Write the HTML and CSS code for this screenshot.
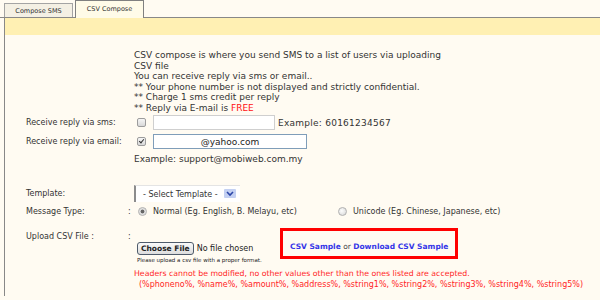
FILE: index.html
```html
<!DOCTYPE html>
<html lang="en">
<head>
    <meta charset="UTF-8">
    <title>CSV Compose</title>
    <link rel="stylesheet" href="styles.css">
</head>
<body>
    <div class="tabs">
        <div class="tab">Compose SMS</div>
        <div class="tab active">CSV Compose</div>
    </div>

    <div class="panel">
        <div class="bar"></div>
        <div class="content">
            <div class="intro">
                CSV compose is where you send SMS to a list of users via uploading<br>
                CSV file<br>
                You can receive reply via sms or email..<br>
                ** Your phone number is not displayed and strictly confidential.<br>
                ** Charge 1 sms credit per reply<br>
                ** Reply via E-mail is <span class="free">FREE</span>
            </div>

            <div class="row row-sms">
                <span class="lbl">Receive reply via sms:</span>
                <span class="colon"></span>
                <input type="checkbox" class="chk">
                <input type="text" class="txt sms-input">
                <span class="hint">Example: 60161234567</span>
            </div>
            <div class="row row-email">
                <span class="lbl">Receive reply via email:</span>
                <span class="colon"></span>
                <input type="checkbox" class="chk" checked>
                <input type="text" class="txt email-input" value="@yahoo.com">
            </div>
            <div class="example">Example: support@mobiweb.com.my</div>

            <div class="row row-tpl">
                <span class="lbl">Template:</span>
                <span class="colon"></span>
                <div class="select">
                    <span>- Select Template -</span>
                    <svg width="12" height="9" viewBox="0 0 12 9">
                        <rect x="0" y="0" width="12" height="9" rx="1" fill="#c3d0f2"/>
                        <path d="M3 3 L6 6 L9 3" fill="none" stroke="#2b46a8" stroke-width="1.6"/>
                    </svg>
                </div>
            </div>

            <div class="row row-type">
                <span class="lbl">Message Type:</span>
                <span class="colon">:</span>
                <label class="opt opt-first"><input type="radio" name="mtype" class="rad" checked>Normal (Eg. English, B. Melayu, etc)</label>
                <label class="opt"><input type="radio" name="mtype" class="rad">Unicode (Eg. Chinese, Japanese, etc)</label>
            </div>

            <div class="row row-upload">
                <span class="lbl">Upload CSV File :</span>
                <span class="colon">:</span>
                <div class="upval">
                    <div class="uptop">
                        <div class="filebox">
                            <input type="file" class="file">
                            <div class="help">Please upload a csv file with a proper format.</div>
                        </div>
                        <div class="samplebox">
                            <a href="#">CSV Sample</a> <span class="or">or</span> <a href="#">Download CSV Sample</a>
                        </div>
                    </div>
                    <div class="errors">
                        <div class="head-note">Headers cannot be modified, no other values other than the ones listed are accepted.</div>
                        <div class="vars">(%phoneno%, %name%, %amount%, %address%, %string1%, %string2%, %string3%, %string4%, %string5%)</div>
                    </div>
                </div>
            </div>
        </div>
    </div>
</body>
</html>
```

FILE: styles.css
```css
body {
    margin: 0;
    background: #fffbf2;
    font-family: "DejaVu Sans", Verdana, sans-serif;
    font-size: 9px;
    color: #333;
}

/* Tabs */
.tabs {
    display: flex;
    align-items: flex-end;
    height: 17px;
    padding-left: 4px;
    gap: 2px;
    border-bottom: 1px solid #888;
}
.tab {
    width: 67px;
    height: 13px;
    line-height: 14px;
    border: 1px solid #a4a4a4;
    border-bottom: none;
    background: #f4f0e4;
    font-size: 6.5px;
    text-align: center;
    color: #333;
}
.tab.active {
    height: 17px;
    line-height: 17px;
    margin-bottom: -1px;
    border-color: #808080;
    background: #fffbe8;
}

.panel {
    margin-left: 4px;
    border-left: 1px solid #888;
    height: 278px;
}
.bar {
    height: 17px;
    background: #fff0b3;
}
.content {
    padding-left: 21px;
}

.intro {
    margin-left: 108px;
    padding-top: 15px;
    line-height: 10.5px;
}
.free {
    color: #ff1010;
}

/* Form rows */
.row {
    display: flex;
    align-items: center;
}
.lbl {
    width: 102px;
    font-size: 8px;
    color: #333;
}
.colon {
    width: 6px;
    font-size: 8px;
}

.chk {
    appearance: none;
    width: 9px;
    height: 9px;
    margin: 0 7px 0 3px;
    border: 1px solid #9c9c9c;
    border-radius: 2px;
    background: linear-gradient(#f6f6f6, #d8d8d8);
    box-sizing: border-box;
    position: relative;
}
.chk:checked::after {
    content: "";
    position: absolute;
    left: 2px;
    top: 0;
    width: 2px;
    height: 4px;
    border: solid #333;
    border-width: 0 1.5px 1.5px 0;
    transform: rotate(40deg);
}

.txt {
    height: 15px;
    box-sizing: border-box;
    margin: 0;
    padding: 0 3px;
    font-family: inherit;
    font-size: 9px;
    color: #222;
    background: #fff;
}
.row-sms {
    margin-top: 2px;
}
.sms-input {
    width: 122px;
    border: 1px solid #cfcfcf;
    margin-right: 3px;
}
.hint {
    letter-spacing: 0.25px;
}
.row-email {
    margin-top: 4px;
}
.email-input {
    width: 154px;
    border: 1px solid #7f9db9;
    text-align: center;
}
.example {
    margin: 5px 0 0 108px;
    line-height: 11px;
}

.row-tpl {
    margin-top: 20px;
}
.select {
    display: flex;
    align-items: flex-end;
    gap: 6px;
    width: 106px;
    height: 17px;
    box-sizing: border-box;
    padding: 0 0 3px 7px;
    border-left: 2px solid #8c8c8c;
    border-top: 1px solid #e4e4e4;
    background: #fff;
    font-size: 8px;
    line-height: 9px;
    white-space: nowrap;
}
.select svg {
    margin-bottom: 1px;
    flex-shrink: 0;
}

.row-type {
    margin-top: 4px;
    height: 11px;
}
.opt {
    display: flex;
    align-items: center;
    font-size: 8px;
    color: #333;
}
.opt-first {
    width: 200px;
}
.rad {
    appearance: none;
    width: 9px;
    height: 9px;
    margin: 0 6px 0 4px;
    border: 1px solid #b0b0b0;
    border-radius: 50%;
    box-sizing: border-box;
    background: radial-gradient(circle at 40% 40%, #fdfdfd, #d4d4d4);
}
.rad:checked {
    background: radial-gradient(circle, #666 0 1.6px, #d8d8d8 2.2px, #f4f4f4);
}

/* Upload */
.row-upload {
    align-items: flex-start;
    margin-top: 11px;
}
.row-upload .lbl,
.row-upload .colon {
    padding-top: 3px;
    line-height: 11px;
}
.upval {
    display: flex;
    flex-direction: column;
}
.uptop {
    display: flex;
    align-items: flex-start;
}
.filebox {
    width: 146px;
    box-sizing: border-box;
    padding: 14px 0 0 3px;
}
.file {
    display: block;
    font-family: inherit;
    font-size: 8px;
    color: #222;
    height: 13px;
}
.file::file-selector-button {
    height: 13px;
    padding: 0 3px;
    margin-right: 3px;
    border: 1px solid #4f5b6b;
    border-radius: 3px;
    background: linear-gradient(#fafafa, #dcdcdc);
    font-family: inherit;
    font-size: 7.5px;
    font-weight: bold;
    color: #222;
}
.help {
    margin-top: 2px;
    font-size: 5.5px;
    line-height: 7px;
    color: #222;
}
.samplebox {
    width: 178px;
    height: 31px;
    box-sizing: border-box;
    border: 3px solid #ff0000;
    padding: 10px 0 0 7px;
    font-size: 7.5px;
    line-height: 11px;
    white-space: nowrap;
}
.samplebox a {
    color: #3535e8;
    font-weight: bold;
    text-decoration: none;
}
.or {
    color: #444;
}
.errors {
    margin-top: 5px;
    color: #ff2525;
    font-size: 8px;
    line-height: 10.7px;
}
.head-note {
    font-size: 7.8px;
}
.vars {
    padding-left: 5px;
}
```
